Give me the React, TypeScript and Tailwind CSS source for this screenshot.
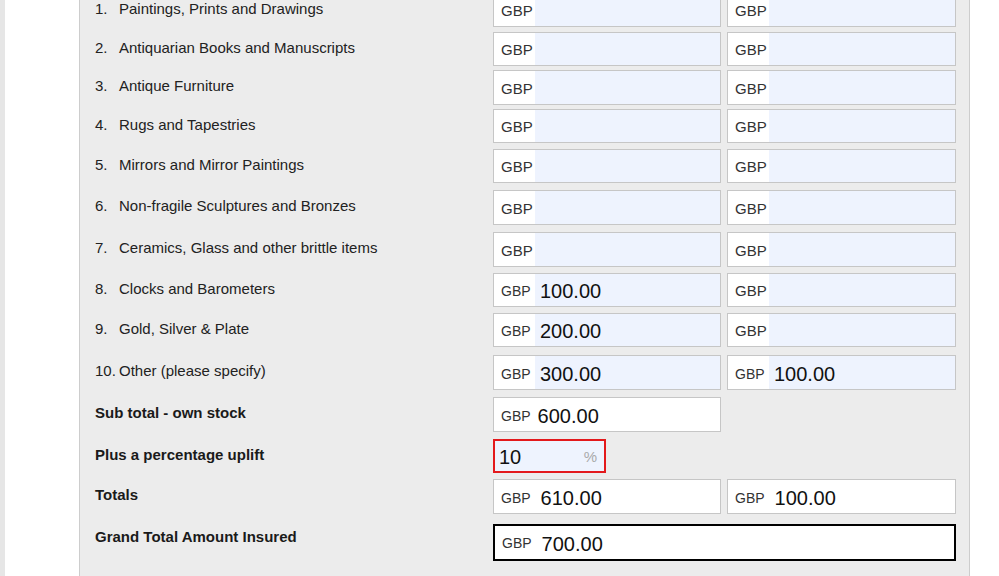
const font = { fontFamily: '"Liberation Sans", Arial, sans-serif' }

type Item = { n: string; label: string; gap: string; h: string; a: string; b: string }

// row gaps and heights read off the form
const items: Item[] = [
  { n: '1.', label: 'Paintings, Prints and Drawings', gap: 'mt-[-7px]', h: 'h-[34px]', a: '', b: '' },
  { n: '2.', label: 'Antiquarian Books and Manuscripts', gap: 'mt-[5px]', h: 'h-[34px]', a: '', b: '' },
  { n: '3.', label: 'Antique Furniture', gap: 'mt-[4px]', h: 'h-[35px]', a: '', b: '' },
  { n: '4.', label: 'Rugs and Tapestries', gap: 'mt-[4px]', h: 'h-[34px]', a: '', b: '' },
  { n: '5.', label: 'Mirrors and Mirror Paintings', gap: 'mt-[6px]', h: 'h-[34px]', a: '', b: '' },
  { n: '6.', label: 'Non-fragile Sculptures and Bronzes', gap: 'mt-[7px]', h: 'h-[35px]', a: '', b: '' },
  { n: '7.', label: 'Ceramics, Glass and other brittle items', gap: 'mt-[7px]', h: 'h-[35px]', a: '', b: '' },
  { n: '8.', label: 'Clocks and Barometers', gap: 'mt-[6px]', h: 'h-[34px]', a: '100.00', b: '' },
  { n: '9.', label: 'Gold, Silver & Plate', gap: 'mt-[6px]', h: 'h-[34px]', a: '200.00', b: '' },
  { n: '10.', label: 'Other (please specify)', gap: 'mt-[8px]', h: 'h-[35px]', a: '300.00', b: '100.00' },
]

function MoneyInput({ value, w }: { value: string; w: string }) {
  return (
    <div className={`${w} h-full flex border border-[#c6c6c6] bg-white`}>
      <div className={`w-[41px] flex items-center pl-[7px] pt-[3px] text-[#333] ${value ? 'text-[14px]' : 'text-[15px]'}`}>GBP</div>
      <div className="flex-1 bg-[#eef3fe] flex items-center pl-[5px] pt-[2px] text-[20px] text-[#111]">{value}</div>
    </div>
  )
}

function TotalBox({ value, w, pad }: { value: string; w: string; pad: string }) {
  return (
    <div className={`${w} h-full flex items-center border border-[#c6c6c6] bg-white pl-[7px] pt-[3px]`}>
      <span className="text-[14px] text-[#333]">GBP</span>
      <span className={`${pad} text-[20px] text-[#111]`}>{value}</span>
    </div>
  )
}

function BoldRow({ label, gap, h, children }: { label: string; gap: string; h: string; children: React.ReactNode }) {
  return (
    <div className={`flex ${gap} ${h}`}>
      <div className="w-[398px] pt-[7px] leading-[18px] text-[15px] font-bold text-[#1a1a1a]">{label}</div>
      <div className="flex gap-[6px] h-full">{children}</div>
    </div>
  )
}

export default function App() {
  return (
    <div className="flex w-[999px] h-[576px] overflow-hidden bg-white" style={font}>
      <div className="w-[5px] bg-[#e6e6e6]" />
      <div className="w-[74px] bg-white" />
      <div className="w-[891px] bg-[#ececec] border-l border-r border-[#cdcdcd] pl-[15px]">
        {items.map((it) => (
          <div key={it.n} className={`flex ${it.gap} ${it.h}`}>
            <div className="w-[398px] flex pt-[7px] leading-[18px] text-[15px] text-[#222]">
              <span className="w-[24px]">{it.n}</span>
              <span>{it.label}</span>
            </div>
            <div className="flex gap-[6px] h-full">
              <MoneyInput value={it.a} w="w-[228px]" />
              <MoneyInput value={it.b} w="w-[229px]" />
            </div>
          </div>
        ))}

        <BoldRow label="Sub total - own stock" gap="mt-[7px]" h="h-[35px]">
          <TotalBox value="600.00" w="w-[228px]" pad="pl-[7px]" />
        </BoldRow>

        <BoldRow label="Plus a percentage uplift" gap="mt-[7px]" h="h-[34px]">
          <div className="w-[113px] h-full flex items-center justify-between border-2 border-[#e3191c] bg-[#eef3fe] pl-[4px] pr-[7px] pt-[2px]">
            <span className="text-[20px] text-[#111]">10</span>
            <span className="text-[15px] text-[#aaa]">%</span>
          </div>
        </BoldRow>

        <BoldRow label="Totals" gap="mt-[6px]" h="h-[35px]">
          <TotalBox value="610.00" w="w-[228px]" pad="pl-[10px]" />
          <TotalBox value="100.00" w="w-[229px]" pad="pl-[10px]" />
        </BoldRow>

        <div className="flex mt-[10px] h-[37px]">
          <div className="w-[398px] pt-[4px] leading-[18px] text-[15px] font-bold text-[#1a1a1a]">Grand Total Amount Insured</div>
          <div className="w-[463px] h-full flex items-center border-2 border-black bg-white pl-[7px] pt-[2px]">
            <span className="text-[14px] text-[#333]">GBP</span>
            <span className="pl-[10px] text-[20px] text-[#111]">700.00</span>
          </div>
        </div>
      </div>
      <div className="flex-1 bg-white" />
    </div>
  )
}
